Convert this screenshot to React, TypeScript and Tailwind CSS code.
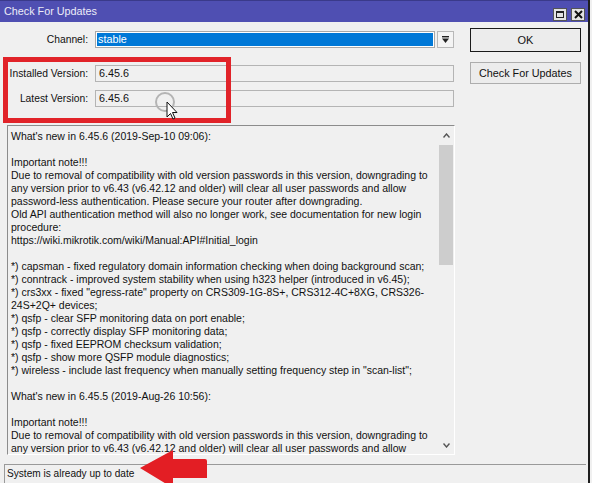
import React from 'react';

const notes: string[] = [
  "What's new in 6.45.6 (2019-Sep-10 09:06):",
  '',
  'Important note!!!',
  'Due to removal of compatibility with old version passwords in this version, downgrading to',
  'any version prior to v6.43 (v6.42.12 and older) will clear all user passwords and allow',
  'password-less authentication. Please secure your router after downgrading.',
  'Old API authentication method will also no longer work, see documentation for new login',
  'procedure:',
  'https://wiki.mikrotik.com/wiki/Manual:API#Initial_login',
  '',
  '*) capsman - fixed regulatory domain information checking when doing background scan;',
  '*) conntrack - improved system stability when using h323 helper (introduced in v6.45);',
  '*) crs3xx - fixed "egress-rate" property on CRS309-1G-8S+, CRS312-4C+8XG, CRS326-',
  '24S+2Q+ devices;',
  '*) qsfp - clear SFP monitoring data on port enable;',
  '*) qsfp - correctly display SFP monitoring data;',
  '*) qsfp - fixed EEPROM checksum validation;',
  '*) qsfp - show more QSFP module diagnostics;',
  '*) wireless - include last frequency when manually setting frequency step in "scan-list";',
  '',
  "What's new in 6.45.5 (2019-Aug-26 10:56):",
  '',
  'Important note!!!',
  'Due to removal of compatibility with old version passwords in this version, downgrading to',
  'any version prior to v6.43 (v6.42.12 and older) will clear all user passwords and allow',
];

const Field: React.FC<{ label: string; value: string }> = ({ label, value }) => (
  <div className="flex items-center h-[17px]">
    <div className="w-[89px] pr-[1px] text-right whitespace-nowrap text-[10.3px]">{label}</div>
    <div className="ml-[6px] w-[359px] h-[17px] border border-[#b4b4b4] bg-[#f0f0f0] pl-[3px] leading-[15px] text-[10.8px]">
      {value}
    </div>
  </div>
);

export default function App() {
  return (
    <div className="relative w-[592px] h-[483px] overflow-hidden bg-[#f0f0f0] text-[10.5px] text-[#111] font-['Liberation_Sans',Arial,sans-serif]">
      <div className="w-[590px] h-full border-r-2 border-[#1e1e1e] flex flex-col">
        {/* title bar */}
        <div className="h-[22px] shrink-0 bg-[#4f4fb2] border-t border-[#3a3a8a] flex items-center justify-between pl-[4px] pr-[3px]">
          <span className="text-[10.8px] text-[#ececf8]">Check For Updates</span>
          <div className="flex gap-[4px] mt-[5px]">
            <div className="w-[14px] h-[13px] bg-[#e4e4e4] border border-[#555] flex items-center justify-center">
              <div className="w-[8px] h-[7px] border border-t-2 border-[#222]" />
            </div>
            <div className="w-[14px] h-[13px] bg-[#e4e4e4] border border-[#555] flex items-center justify-center">
              <svg width="9" height="9" viewBox="0 0 9 9">
                <path d="M1 1 L8 8 M8 1 L1 8" stroke="#111" strokeWidth="2" />
              </svg>
            </div>
          </div>
        </div>

        <div className="flex">
          {/* left column */}
          <div className="w-[456px] flex flex-col">
            <div className="mt-[9px] flex items-center h-[17px]">
              <div className="w-[89px] pr-[1px] text-right text-[10.3px]">Channel:</div>
              <div className="ml-[6px] w-[340px] h-[17px] border border-[#a8a8a8] bg-white p-[1px]">
                <div className="h-full bg-[#0078d7] text-white pl-[1px] leading-[13px] text-[10.8px]">stable</div>
              </div>
              <div className="ml-[2px] w-[17px] h-[17px] border border-[#b8b8b8] bg-[#f4f4f4] flex items-center justify-center">
                <svg width="9" height="9" viewBox="0 0 9 9">
                  <rect x="1" y="1" width="7" height="1.4" fill="#222" />
                  <path d="M1 3.5 H8 L4.5 8 Z" fill="#222" />
                </svg>
              </div>
            </div>

            <div className="mt-[17px]">
              <Field label="Installed Version:" value="6.45.6" />
            </div>
            <div className="mt-[8px]">
              <Field label="Latest Version:" value="6.45.6" />
            </div>

            {/* release notes */}
            <div className="mt-[18px] ml-[7px] w-[448px] h-[330px] border-t border-l border-[#8c8c8c] border-r border-b border-r-white border-b-white flex">
              <div className="flex-1 overflow-hidden pl-[3px] pt-[4px]">
                {notes.map((line, i) => (
                  <div key={i} className="h-[13px] leading-[13px] whitespace-pre">
                    {line}
                  </div>
                ))}
              </div>
              <div className="w-[16px] flex flex-col bg-[#f0f0f0]">
                <div className="h-[19px] flex items-center justify-center">
                  <svg width="7" height="5" viewBox="0 0 7 5">
                    <path d="M0.5 4.5 L3.5 1 L6.5 4.5" stroke="#555" strokeWidth="1.4" fill="none" />
                  </svg>
                </div>
                <div className="h-[120px] mx-[1px] bg-[#cdcdcd]" />
                <div className="flex-1" />
                <div className="h-[17px] flex items-center justify-center">
                  <svg width="7" height="5" viewBox="0 0 7 5">
                    <path d="M0.5 0.5 L3.5 4 L6.5 0.5" stroke="#555" strokeWidth="1.4" fill="none" />
                  </svg>
                </div>
              </div>
            </div>
          </div>

          {/* right column */}
          <div className="pl-[14px] pt-[6px] flex flex-col">
            <div className="w-[111px] h-[24px] border border-[#1a1a1a] bg-[#ececec] flex items-center justify-center text-[11px]">
              OK
            </div>
            <div className="mt-[10px] w-[111px] h-[22px] border border-[#adadad] bg-[#ececec] flex items-center justify-center text-[10.8px]">
              Check For Updates
            </div>
          </div>
        </div>

        {/* status bar */}
        <div className="mt-[9px] ml-[4px] w-[582px] h-[21px] border-t border-l border-[#9a9a9a] pl-[2px] leading-[18px] text-[10.1px]">
          System is already up to date
        </div>
      </div>

      {/* red highlight around the version fields */}
      <div className="absolute left-[3px] top-[57px] w-[228px] h-[66px] border-[5px] border-[#e12329]" />

      {/* red arrow pointing at the status line */}
      <svg className="absolute left-[138px] top-[448px]" width="70" height="40" viewBox="0 0 70 40">
        <path d="M2 20 L35 2 L35 11 L67 11 Q69 11 69 13 L69 30 L35 30 L35 40 Z" fill="#e31e24" />
      </svg>

      {/* busy cursor */}
      <svg className="absolute left-[154px] top-[91px]" width="30" height="30" viewBox="0 0 30 30">
        <circle cx="11" cy="11" r="9" stroke="#b4b4b4" strokeWidth="2" fill="none" />
        <path d="M13 11 L13 26 L16.5 22.5 L19 28 L21 27 L18.5 21.5 L23 21.5 Z" fill="#fff" stroke="#111" strokeWidth="1" strokeLinejoin="round" />
      </svg>
    </div>
  );
}
